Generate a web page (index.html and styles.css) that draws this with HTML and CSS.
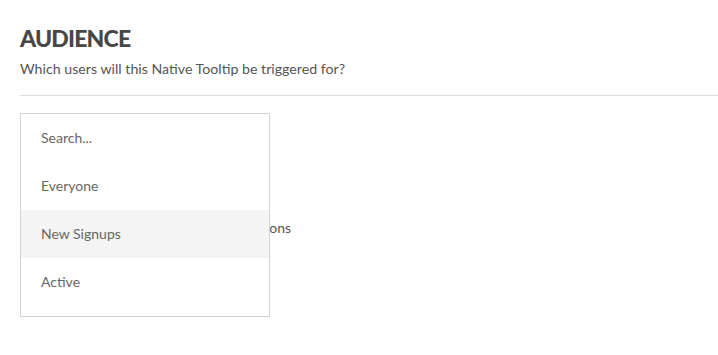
FILE: index.html
```html
<!DOCTYPE html>
<html>
<head>
<meta charset="utf-8">
<link rel="stylesheet" href="styles.css">
</head>
<body>
<section class="panel">
  <h1 class="title">AUDIENCE</h1>
  <p class="subtitle">Which users will this Native Tooltip be triggered for?</p>
  <hr class="divider">
  <div class="field">
    <div class="rows">
      <div class="row">Everyone</div>
      <div class="row">New Signups</div>
      <div class="row shown">Users with specific conditions</div>
    </div>
    <ul class="menu">
      <li class="menu-item search">Search...</li>
      <li class="menu-item">Everyone</li>
      <li class="menu-item hover">New Signups</li>
      <li class="menu-item">Active</li>
    </ul>
  </div>
</section>
</body>
</html>
```
FILE: styles.css
```css
html, body {
  margin: 0;
  padding: 0;
  background: #fff;
}
body {
  font-family: Lato, "Open Sans", sans-serif;
  color: #555;
  width: 718px;
  height: 355px;
  overflow: hidden;
}
.panel {
  padding: 25px 0 0 20px;
}
.title {
  margin: 0;
  font-size: 23px;
  line-height: 26px;
  font-weight: 900;
  color: #474747;
  letter-spacing: -0.8px;
}
.subtitle {
  margin: 8px 0 0;
  font-size: 14.2px;
  line-height: 20px;
  color: #555;
}
.divider {
  margin: 16px 0 0;
  border: 0;
  border-top: 1px solid #dcdcdc;
  height: 0;
}
.field {
  position: relative;
  margin-top: 17px;
}
.rows {
  padding-top: 1px;
}
.row {
  height: 48px;
  line-height: 36px;
  font-size: 14px;
  color: #555;
  padding-left: 20px;
  visibility: hidden;
}
.row.shown {
  visibility: visible;
  padding-left: 89px;
}
.menu {
  position: absolute;
  top: 0;
  left: 0;
  width: 248px;
  margin: 0;
  padding: 0 0 10px;
  list-style: none;
  background: #fff;
  border: 1px solid #d2d2d2;
}
.menu-item {
  height: 48px;
  line-height: 48px;
  padding-left: 20px;
  font-size: 14px;
  color: #666;
}
.menu-item.hover {
  background: #f4f4f4;
}
```
